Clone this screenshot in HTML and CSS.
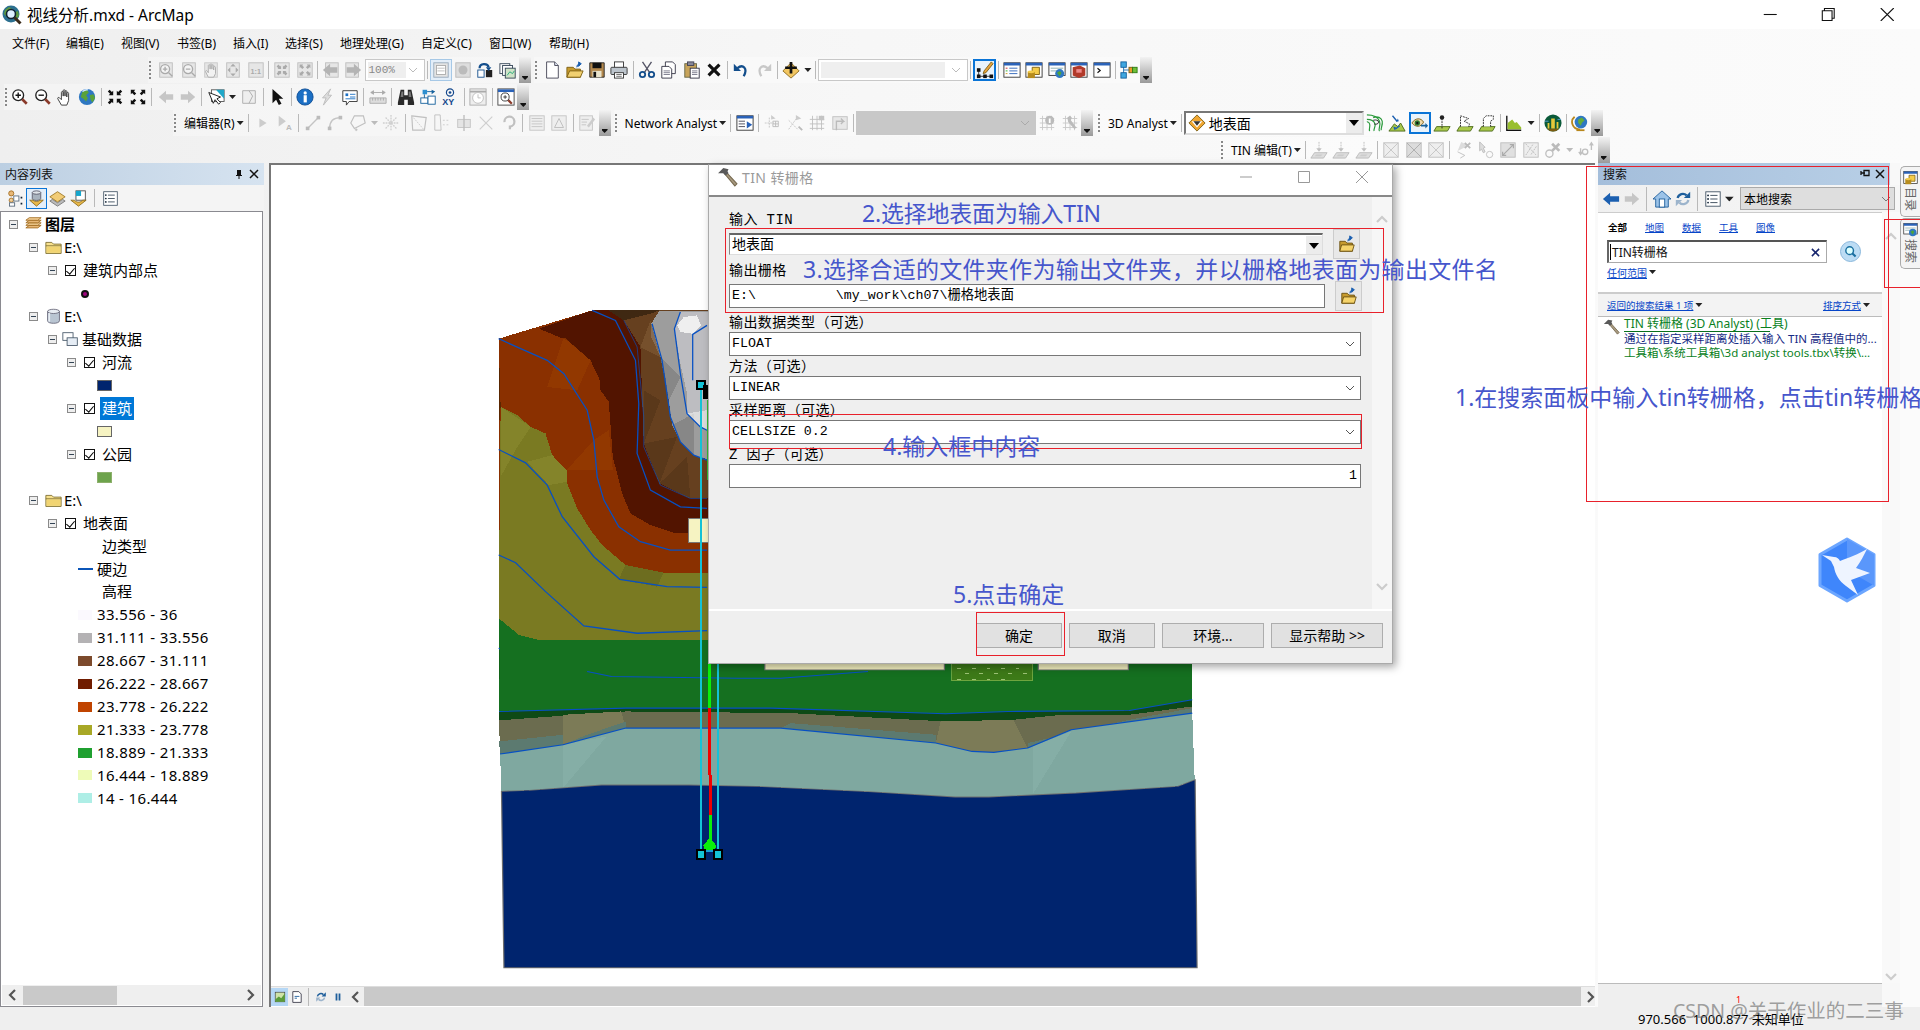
FILE: index.html
```html
<!DOCTYPE html>
<html lang="zh-CN">
<head>
<meta charset="utf-8">
<title>视线分析.mxd - ArcMap</title>
<link rel="stylesheet" href="styles.css">
</head>
<body>
<svg class="defs" aria-hidden="true">
<symbol id="app" viewBox="0 0 20 20"><circle cx="9" cy="9" r="8.500" fill="#2b6f8f"/><path d="M3 5l4-3 3 2-3 3 1 4-3 1-3-3zM11 8l5-2 1 5-4 4z" fill="#5e9a3e"/><circle cx="9" cy="9" r="4.500" fill="#dff0ff" stroke="#123" stroke-width="1.600"/><path d="M12.500 12.500l6 6" stroke="#3a2a1a" stroke-width="3"/></symbol>
<symbol id="zin" viewBox="0 0 20 20"><circle cx="8" cy="8" r="6" fill="#fff" stroke="#222" stroke-width="1.5"/><path d="M5 8h6M8 5v6" stroke="#111" stroke-width="1.5"/><path d="M12.500 12.500l5 5" stroke="#8a3a2a" stroke-width="3"/></symbol>
<symbol id="zout" viewBox="0 0 20 20"><circle cx="8" cy="8" r="6" fill="#fff" stroke="#222" stroke-width="1.500"/><path d="M5 8h6" stroke="#111" stroke-width="1.500"/><path d="M12.500 12.500l5 5" stroke="#8a3a2a" stroke-width="3"/></symbol>
<symbol id="hand" viewBox="0 0 20 20"><path d="M6 19l-4-7c-.6-1.500 1-2 2-1l2 2V5c0-1.500 2-1.500 2 0v4V3c0-1.500 2-1.500 2 0v6V4c0-1.500 2-1.500 2 0v6V6c0-1.500 2-1.500 2 0v8l-2 5z" fill="#fff" stroke="#333"/></symbol>
<symbol id="globe" viewBox="0 0 20 20"><circle cx="10" cy="10" r="9" fill="#2f78c2"/><path d="M5 4l5-2 2 3-3 3 2 3-2 4-3-3-3-2zM13 8l4-1 2 4-3 5-2-3z" fill="#5aa23a"/><path d="M5 4a7 7 0 0 1 6-2" stroke="#cfe6ff" stroke-width="1.500" fill="none"/></symbol>
<symbol id="fin" viewBox="0 0 20 20"><path d="M8 8V3L6.500 4.500 4 2 2 4l2.500 2.500L3 8zM12 8V3l1.500 1.500L16 2l2 2-2.500 2.500L17 8zM8 12v5l-1.500-1.500L4 18l-2-2 2.500-2.500L3 12zM12 12v5l1.500-1.500L16 18l2-2-2.500-2.500L17 12z" fill="#111"/></symbol>
<symbol id="fout" viewBox="0 0 20 20"><path d="M2 2h5L5.500 3.500 8 6 6 8 3.500 5.500 2 7zM18 2h-5l1.500 1.500L12 6l2 2 2.500-2.500L18 7zM2 18h5l-1.500-1.500L8 14l-2-2-2.500 2.500L2 13zM18 18h-5l1.500-1.500L12 14l2-2 2.500 2.500L18 13z" fill="#111"/></symbol>
<symbol id="back" viewBox="0 0 20 20"><path d="M2 10l8-7v4h8v6h-8v4z" fill="#c6c6c6"/></symbol>
<symbol id="fwd" viewBox="0 0 20 20"><path d="M18 10l-8-7v4H2v6h8v4z" fill="#c6c6c6"/></symbol>
<symbol id="sel" viewBox="0 0 20 20"><rect x="5" y="2" width="14" height="13" fill="#fff" stroke="#555"/><path d="M10 2h9v10z" fill="#1fa8c9"/><path d="M2 5l5 12 2-4 4 5 2-2-4-4 4-2z" fill="#fff" stroke="#111"/></symbol>
<symbol id="clr" viewBox="0 0 20 20"><path d="M3 3h14v14H3zM10 3l4 6-4 8" fill="#eee" stroke="#aaa"/></symbol>
<symbol id="arw" viewBox="0 0 20 20"><path d="M5 1v16l4-4 3 6 3-1.500-3-5.500h5z" fill="#111"/></symbol>
<symbol id="info" viewBox="0 0 20 20"><circle cx="10" cy="10" r="9" fill="#1b6fc4" stroke="#0c4c94"/><rect x="8.500" y="8" width="3.500" height="8" fill="#fff"/><circle cx="10.200" cy="5.500" r="1.800" fill="#fff"/></symbol>
<symbol id="bolt" viewBox="0 0 20 20"><path d="M14 1L5 11h4l-3 8 9-11h-4z" fill="#ddd" stroke="#bbb"/></symbol>
<symbol id="pop" viewBox="0 0 20 20"><path d="M2 3h16v12h-9l-3 4v-4H2z" fill="#fff" stroke="#333"/><path d="M5 6h3v3H5z" fill="#1b6fc4"/><path d="M10 7h6M10 10h6M5 12h11" stroke="#1b6fc4"/></symbol>
<symbol id="meas" viewBox="0 0 20 20"><path d="M1 11h18v6H1z" fill="#ddd" stroke="#aaa"/><path d="M4 11v3M7 11v3M10 11v3M13 11v3M16 11v3M2 5h16M2 5l3-2v4zM18 5l-3-2v4z" stroke="#aaa" fill="#aaa"/></symbol>
<symbol id="bino" viewBox="0 0 20 20"><path d="M4 2h4v6h4V2h4l3 14v3h-7v-6H8v6H1v-3z" fill="#2a2a2a"/><path d="M5 4h2v6H4zM13 4h2l1 6h-3z" fill="#777"/></symbol>
<symbol id="rte" viewBox="0 0 20 20"><path d="M9 4h6M6 7v5h3M12 15V9" stroke="#14609c" fill="none"/><rect x="2" y="11" width="8" height="6" fill="#fff" stroke="#14609c"/><rect x="10" y="9" width="8" height="9" fill="#fff" stroke="#14609c"/><rect x="4" y="2" width="5" height="5" fill="#2d8fd0"/><path d="M14 2l4 2-4 3z" fill="#14609c"/></symbol>
<symbol id="time" viewBox="0 0 20 20"><rect x="1" y="1" width="18" height="18" fill="#eee" stroke="#aaa"/><path d="M1 4h18" stroke="#aaa" stroke-width="2"/><circle cx="10" cy="11" r="6" fill="#fff" stroke="#bbb"/><path d="M10 7v4h3" stroke="#bbb" fill="none"/></symbol>
<symbol id="wmag" viewBox="0 0 20 20"><rect x="1" y="1" width="18" height="18" fill="#fff" stroke="#444"/><path d="M1 3h18" stroke="#2a62b8" stroke-width="3"/><circle cx="9" cy="10" r="4.500" fill="#fff" stroke="#333"/><path d="M7 10h4M9 8v4" stroke="#333"/><path d="M12.500 13.500l4 4" stroke="#8a3a2a" stroke-width="2.500"/></symbol>
<symbol id="pgin" viewBox="0 0 20 20"><rect x="3" y="2" width="14" height="16" fill="#e6e6e6" stroke="#bdbdbd"/><circle cx="9" cy="9" r="5" fill="#f4f4f4" stroke="#aaa" stroke-width="1.500"/><path d="M6.500 9h5M9 6.500v5M13 13l4 4" stroke="#aaa" stroke-width="1.500"/></symbol>
<symbol id="pgout" viewBox="0 0 20 20"><rect x="3" y="2" width="14" height="16" fill="#e6e6e6" stroke="#bdbdbd"/><circle cx="9" cy="9" r="5" fill="#f4f4f4" stroke="#aaa" stroke-width="1.500"/><path d="M6.500 9h5M13 13l4 4" stroke="#aaa" stroke-width="1.500"/></symbol>
<symbol id="pgh" viewBox="0 0 20 20"><rect x="3" y="2" width="14" height="16" fill="#e6e6e6" stroke="#c8c8c8"/><path d="M7 18l-3-6c-.5-1 1-2 1.500-1L7 13V5c0-1 2-1 2 0v4V4c0-1 2-1 2 0v5V5c0-1 2-1 2 0v5V7c0-1 2-1 2 0v7l-2 4z" fill="#f2f2f2" stroke="#aaa"/></symbol>
<symbol id="pgfit" viewBox="0 0 20 20"><rect x="3" y="2" width="14" height="16" fill="#e6e6e6" stroke="#bdbdbd"/><path d="M10 3l3 3H7zM10 17l-3-3h6zM4 10l3-3v6zM16 10l-3 3V7z" fill="#aaa"/></symbol>
<symbol id="pgfi" viewBox="0 0 20 20"><rect x="2" y="2" width="16" height="16" fill="#e6e6e6" stroke="#bdbdbd"/><path d="M9 9V5L8 6 6 4 4 6l2 2-1 1zM11 9V5l1 1 2-2 2 2-2 2 1 1zM9 11v4l-1-1-2 2-2-2 2-2-1-1zM11 11v4l1-1 2 2 2-2-2-2 1-1z" fill="#aaa"/></symbol>
<symbol id="pgfo" viewBox="0 0 20 20"><rect x="2" y="2" width="16" height="16" fill="#e6e6e6" stroke="#bdbdbd"/><path d="M4 4h4L7 5l2 2-2 2-2-2-1 1zM16 4h-4l1 1-2 2 2 2 2-2 1 1zM4 16h4l-1-1 2-2-2-2-2 2-1-1zM16 16h-4l1-1-2-2 2-2 2 2 1-1z" fill="#aaa"/></symbol>
<symbol id="pgb" viewBox="0 0 20 20"><rect x="4" y="2" width="14" height="16" fill="#e6e6e6" stroke="#bdbdbd"/><path d="M1 10l8-7v4h8v6H9v4z" fill="#b4b4b4"/></symbol>
<symbol id="pgf" viewBox="0 0 20 20"><rect x="2" y="2" width="14" height="16" fill="#e6e6e6" stroke="#bdbdbd"/><path d="M19 10l-8-7v4H3v6h8v4z" fill="#b4b4b4"/></symbol>
<symbol id="lay1" viewBox="0 0 20 20"><rect x="2" y="2" width="16" height="16" fill="#e4e4e4" stroke="#9ab"/><rect x="5" y="5" width="10" height="10" fill="#fff" stroke="#aaa"/><path d="M6 8h8M6 11h8" stroke="#bbb"/></symbol>
<symbol id="lay2" viewBox="0 0 20 20"><rect x="2" y="2" width="16" height="16" fill="#ddd" stroke="#bbb"/><circle cx="10" cy="10" r="5" fill="#bbb"/></symbol>
<symbol id="flip" viewBox="0 0 20 20"><rect x="2" y="10" width="7" height="8" fill="#fff" stroke="#134e8c"/><rect x="11" y="10" width="7" height="8" fill="#222"/><path d="M4 8c0-6 9-6 10-1" fill="none" stroke="#134e8c" stroke-width="2.500"/><path d="M11 7h6l-3 4z" fill="#134e8c"/></symbol>
<symbol id="stack" viewBox="0 0 20 20"><rect x="1" y="3" width="11" height="11" fill="#fff" stroke="#345"/><rect x="4" y="5" width="11" height="11" fill="#fff" stroke="#345"/><rect x="7" y="8" width="11" height="11" fill="#cfe3c8" stroke="#345"/><path d="M9 16l3-4 3 2 2-3" stroke="#2a7" fill="none"/></symbol>
<symbol id="new" viewBox="0 0 20 20"><path d="M4 1h9l4 4v14H4z" fill="#fff" stroke="#445"/><path d="M13 1v4h4" fill="#dfe6f2" stroke="#445"/></symbol>
<symbol id="open" viewBox="0 0 20 20"><path d="M1 7h7l2 2h6v9H1z" fill="#c79b2e" stroke="#7b5e12"/><path d="M1 18l3-7h15l-3 7z" fill="#f1d070" stroke="#7b5e12"/><path d="M12 7c0-3 2-4 4-4M14 1l3 2-3 3z" fill="#1b5fb0" stroke="#1b5fb0"/></symbol>
<symbol id="save" viewBox="0 0 20 20"><path d="M2 2h16v16H2z" fill="#b3884d" stroke="#222"/><rect x="5" y="2" width="10" height="6" fill="#111"/><rect x="5" y="11" width="10" height="7" fill="#e9e3cc"/><rect x="6" y="12" width="3" height="6" fill="#111"/></symbol>
<symbol id="prnt" viewBox="0 0 20 20"><rect x="5" y="1" width="10" height="7" fill="#fff" stroke="#333"/><rect x="1" y="7" width="18" height="8" rx="1" fill="#bcc4cc" stroke="#333"/><rect x="5" y="13" width="10" height="6" fill="#fff" stroke="#333"/><path d="M7 15h6M7 17h6" stroke="#666"/></symbol>
<symbol id="cut" viewBox="0 0 20 20"><path d="M5 1l8 12M15 1L7 13" stroke="#556" stroke-width="1.500"/><circle cx="5" cy="15" r="3" fill="none" stroke="#134e8c" stroke-width="2"/><circle cx="15" cy="15" r="3" fill="none" stroke="#134e8c" stroke-width="2"/></symbol>
<symbol id="copy" viewBox="0 0 20 20"><path d="M6 1h8l3 3v10H6z" fill="#fff" stroke="#334"/><path d="M2 6h8l3 3v10H2z" fill="#fff" stroke="#334"/><path d="M4 11h7M4 13h7M4 15h7" stroke="#778"/></symbol>
<symbol id="pst" viewBox="0 0 20 20"><rect x="2" y="3" width="13" height="15" fill="#c8a45a" stroke="#664"/><rect x="5" y="1" width="7" height="4" fill="#889" stroke="#445"/><rect x="8" y="8" width="10" height="11" fill="#fff" stroke="#334"/><path d="M10 11h6M10 13h6M10 15h6" stroke="#778"/></symbol>
<symbol id="del" viewBox="0 0 20 20"><path d="M4 4l12 12M16 4L4 16" stroke="#111" stroke-width="3.500"/></symbol>
<symbol id="undo" viewBox="0 0 20 20"><path d="M6 8c6-5 12 0 7 9" fill="none" stroke="#134e8c" stroke-width="2.500"/><path d="M2 3v8h8z" fill="#134e8c"/></symbol>
<symbol id="redo" viewBox="0 0 20 20"><path d="M14 8C8 3 2 8 7 17" fill="none" stroke="#c8c8c8" stroke-width="2.500"/><path d="M18 3v8h-8z" fill="#c8c8c8"/></symbol>
<symbol id="add" viewBox="0 0 20 20"><path d="M10 2l9 9-9 8-9-8z" fill="#f2c661" stroke="#8b6a1c"/><path d="M8.500 1h3v5h5v3h-5v5h-3V9h-5V6h5z" fill="#111"/></symbol>
<symbol id="edt" viewBox="0 0 20 20"><path d="M3 10v7h14" fill="none" stroke="#333"/><rect x="1" y="8" width="4" height="4" fill="#111"/><rect x="1" y="15" width="4" height="4" fill="#111"/><rect x="8" y="15" width="4" height="4" fill="#111"/><rect x="15" y="15" width="4" height="4" fill="#111"/><path d="M9 11L17 1l2 2-8 10-3 1z" fill="#e9a33a" stroke="#7b5e12"/></symbol>
<symbol id="tocw" viewBox="0 0 20 20"><rect x="1" y="2" width="18" height="16" fill="#fff" stroke="#333"/><path d="M1 3.500h18" stroke="#2a62b8" stroke-width="3"/><path d="M7 8h9M7 11h9M7 14h9" stroke="#2a62b8"/><path d="M3 8h2" stroke="#c22"/><path d="M3 11h2" stroke="#2a2"/><path d="M3 14h2" stroke="#c92"/></symbol>
<symbol id="catw" viewBox="0 0 20 20"><rect x="1" y="2" width="18" height="16" fill="#fff" stroke="#333"/><path d="M1 3.500h18" stroke="#2a62b8" stroke-width="3"/><path d="M8 7h8v8H8z" fill="#f4cc4a" stroke="#7b5e12"/><path d="M3 12h8v7H3z" fill="#b78c1e"/><ellipse cx="7" cy="12" rx="4" ry="1.500" fill="#f4cc4a"/></symbol>
<symbol id="srw" viewBox="0 0 20 20"><rect x="1" y="2" width="18" height="14" fill="#fff" stroke="#333"/><path d="M1 3.500h18" stroke="#2a62b8" stroke-width="3"/><path d="M3 8h14M3 11h8" stroke="#8aa"/><circle cx="13" cy="14" r="5" fill="#2f78c2"/><path d="M10 13l3-2 2 2-2 4z" fill="#4da43a"/></symbol>
<symbol id="tlw" viewBox="0 0 20 20"><rect x="1" y="2" width="18" height="16" fill="#fff" stroke="#333"/><path d="M1 3.500h18" stroke="#2a62b8" stroke-width="3"/><path d="M3 7l8-2 6 3v8l-7 3-7-3z" fill="#b23a2a"/><path d="M7 9h6v4H7z" fill="#e88"/></symbol>
<symbol id="pyw" viewBox="0 0 20 20"><rect x="1" y="2" width="18" height="16" fill="#fff" stroke="#333"/><path d="M1 3.500h18" stroke="#2a62b8" stroke-width="3"/><path d="M5 8l3 2.500L5 13" fill="none" stroke="#111" stroke-width="1.300"/></symbol>
<symbol id="mb" viewBox="0 0 20 20"><path d="M4 5v10M4 10h6" stroke="#1a6fb4"/><rect x="1" y="1" width="6" height="6" fill="#3fa7e0" stroke="#14609c"/><rect x="1" y="13" width="6" height="6" fill="#3fa7e0" stroke="#14609c"/><rect x="10" y="7" width="4" height="6" fill="#ea9a2a" stroke="#7b5e12"/><rect x="14" y="7" width="5" height="6" fill="#6fbf3a" stroke="#2c7a12"/></symbol>
<symbol id="tri" viewBox="0 0 20 20"><path d="M6 5l8 5-8 5z" fill="#ccc"/></symbol>
<symbol id="ln" viewBox="0 0 20 20"><path d="M4 16L16 4" stroke="#c4c4c4" stroke-width="1.500"/><rect x="2" y="14" width="4" height="4" fill="#bbb"/><rect x="14" y="2" width="4" height="4" fill="#bbb"/></symbol>
<symbol id="crv" viewBox="0 0 20 20"><path d="M4 16C4 8 8 4 16 4" stroke="#c4c4c4" stroke-width="1.500" fill="none"/><rect x="2" y="14" width="4" height="4" fill="#bbb"/><rect x="14" y="2" width="4" height="4" fill="#bbb"/></symbol>
<symbol id="ply" viewBox="0 0 20 20"><path d="M6 2h10l2 8-12 6-4-6z" fill="none" stroke="#c0c0c0" stroke-width="1.300"/><path d="M8 16v3M6.500 17.500h3" stroke="#bbb"/></symbol>
<symbol id="str" viewBox="0 0 20 20"><path d="M10 1v18M1 10h18M4 4l12 12M16 4L4 16" stroke="#d0d0d0" stroke-width="1.500" stroke-dasharray="2 1"/></symbol>
<symbol id="bxd" viewBox="0 0 20 20"><path d="M2 2l16 2-2 14H3z" fill="none" stroke="#c0c0c0" stroke-width="1.300"/><path d="M2 2l14 16" stroke="#ccc" stroke-dasharray="2 1"/></symbol>
<symbol id="bxr" viewBox="0 0 20 20"><path d="M2 1h6l1 17H2z" fill="none" stroke="#c0c0c0"/><path d="M11 7h7M11 12h7" stroke="#ccc" stroke-dasharray="2 2"/></symbol>
<symbol id="crs" viewBox="0 0 20 20"><rect x="3" y="6" width="14" height="9" fill="#e4e4e4" stroke="#c4c4c4"/><path d="M10 1v18" stroke="#bdbdbd" stroke-width="1.500"/></symbol>
<symbol id="xln" viewBox="0 0 20 20"><path d="M3 3l14 14M17 3L3 17" stroke="#cfcfcf" stroke-width="1.300"/></symbol>
<symbol id="lop" viewBox="0 0 20 20"><path d="M5 9a5.500 5.500 0 1 1 6 5v3" fill="none" stroke="#c0c0c0" stroke-width="2.500"/></symbol>
<symbol id="tbl" viewBox="0 0 20 20"><rect x="2" y="2" width="16" height="16" fill="#eee" stroke="#c4c4c4"/><path d="M4 5h12M4 8h12M4 11h12M4 14h12" stroke="#c4c4c4"/></symbol>
<symbol id="tbv" viewBox="0 0 20 20"><rect x="2" y="2" width="16" height="16" fill="#eee" stroke="#c4c4c4"/><path d="M5 15l5-10 5 10z" fill="none" stroke="#bbb"/></symbol>
<symbol id="tbe" viewBox="0 0 20 20"><rect x="2" y="2" width="14" height="16" fill="#eee" stroke="#c4c4c4"/><path d="M4 6h8M4 9h6M4 12h5" stroke="#c4c4c4"/><path d="M10 13l7-9 2 2-7 9z" fill="#ccc"/></symbol>
<symbol id="nw" viewBox="0 0 20 20"><rect x="1" y="2" width="18" height="16" fill="#fff" stroke="#333"/><path d="M1 3.500h18" stroke="#2a62b8" stroke-width="3"/><path d="M3 8h7M3 11h7M3 14h7" stroke="#445"/><path d="M12 8l6 4-6 4z" fill="#2a62b8"/></symbol>
<symbol id="ngr" viewBox="0 0 20 20"><path d="M2 10h10M7 4v12" stroke="#c4c4c4" stroke-dasharray="2 1"/><path d="M11 8h6v6h-6zM14 8v6M11 11h6" fill="none" stroke="#bbb"/><path d="M9 1l5 4-5 1z" fill="#ccc"/></symbol>
<symbol id="ndg" viewBox="0 0 20 20"><path d="M3 7l10 10M3 17L13 3" stroke="#c4c4c4" stroke-dasharray="2 1"/><path d="M11 1l6 4-6 2z" fill="#ccc"/><path d="M14 14l4 4" stroke="#bbb" stroke-width="2"/></symbol>
<symbol id="grd" viewBox="0 0 20 20"><path d="M2 6h16M2 11h16M2 16h16M5 2v16M10 2v16M15 2v16" stroke="#c0c0c0"/><rect x="12" y="2" width="6" height="5" fill="#c4c4c4"/></symbol>
<symbol id="grp" viewBox="0 0 20 20"><rect x="2" y="3" width="16" height="14" fill="#e8e8e8" stroke="#c0c0c0"/><path d="M6 18V8h8l-3-3M14 8l-3 3" fill="none" stroke="#bbb" stroke-width="1.500"/></symbol>
<symbol id="gri" viewBox="0 0 20 20"><path d="M2 5h16M2 10h16M2 15h16M5 2v16M10 2v16M15 2v16" stroke="#c8c8c8"/><circle cx="13" cy="7" r="5" fill="#bbb"/><rect x="12" y="5" width="2" height="5" fill="#fff"/></symbol>
<symbol id="grw" viewBox="0 0 20 20"><path d="M2 5h16M2 10h16M2 15h16M5 2v16M10 2v16M15 2v16" stroke="#c8c8c8"/><path d="M7 4l3-2 2 2-1 3 6 8-2 2-7-8z" fill="#bbb"/></symbol>
<symbol id="dia" viewBox="0 0 20 20"><path d="M10 1l9 9-9 9-9-9z" fill="#f0a630" stroke="#7b5e12"/><path d="M4 8h12l-6 7z" fill="#fff"/><path d="M6 8h8l-4 5z" fill="#333"/></symbol>
<symbol id="cnt" viewBox="0 0 20 20"><path d="M1 1c6 0 12 2 14 7s-2 9 0 11M1 6c5 0 8 2 9 5s-2 6-1 8M4 19c-1-3 1-5 0-8S1 9 1 9M8 4c5-2 9 0 10 4s-2 8-1 10" fill="none" stroke="#2b9a3c" stroke-width="1.300"/><path d="M8 7c3-1 6 0 6 2s-3 3-5 2" fill="none" stroke="#222"/></symbol>
<symbol id="stp" viewBox="0 0 20 20"><path d="M1 19l6-8 4 3 3-4 5 9z" fill="#a9c84a" stroke="#4c6a1a"/><path d="M5 2l5 6M13 13l-5 4" stroke="#1b5fb0" stroke-width="1.500"/><path d="M9 9l3-1-1-3zM7 18l2-3-3-1z" fill="#1b5fb0"/></symbol>
<symbol id="eye" viewBox="0 0 20 20"><path d="M1 10c4-6 10-6 13-1-3 6-9 6-13 1z" fill="#f1d9a8" stroke="#7b5e12"/><circle cx="7" cy="10" r="3" fill="#2f7a33"/><circle cx="7" cy="10" r="1.300" fill="#111"/><path d="M11 12h5v-2l3 3-3 3v-2h-5z" fill="#14609c"/></symbol>
<symbol id="pln" viewBox="0 0 20 20"><path d="M4 14h15l-3 5H1z" fill="#a9c84a" stroke="#4c6a1a"/><path d="M10 5v11" stroke="#222" stroke-dasharray="2 1"/><circle cx="10" cy="4" r="2.500" fill="#222"/></symbol>
<symbol id="plp" viewBox="0 0 20 20"><path d="M4 14h15l-3 5H1z" fill="#a9c84a" stroke="#4c6a1a"/><path d="M5 14V2l9 3-5 3 6 3-1 3" fill="#fff" stroke="#222" stroke-dasharray="2 1"/></symbol>
<symbol id="plb" viewBox="0 0 20 20"><path d="M4 14h15l-3 5H1z" fill="#a9c84a" stroke="#4c6a1a"/><path d="M6 14V5l3-3h8v4l-3 2v6" fill="#fff" stroke="#222" stroke-dasharray="2 1"/></symbol>
<symbol id="prf" viewBox="0 0 20 20"><path d="M2 2v16h16" fill="none" stroke="#111" stroke-width="1.500"/><path d="M3 17V10l5-4 3 4 2-1 5 6v2z" fill="#99bf2f"/></symbol>
<symbol id="wrld" viewBox="0 0 20 20"><circle cx="10" cy="10" r="9.500" fill="#0b5a3a"/><path d="M3 16h14a9 9 0 0 1-14 0z" fill="#7a5c10"/><path d="M8 5h4v11H8zM4 10h2v6H4zM14 9h2v7h-2z" fill="#e5c83a"/><path d="M1 8h4M15 6h4" stroke="#5aa3d8"/></symbol>
<symbol id="arc" viewBox="0 0 20 20"><path d="M4 3a8 8 0 0 0 6 14" fill="none" stroke="#b8871c" stroke-width="2"/><path d="M6 18h9" stroke="#b8871c" stroke-width="2"/><circle cx="11" cy="9" r="7" fill="#2f78c2"/><path d="M8 6l4-2 3 3-3 3-1 3-3-3z" fill="#63ad3a"/></symbol>
<symbol id="tnu" viewBox="0 0 20 20"><path d="M5 13h14l-4 6H1z" fill="#ddd" stroke="#bbb"/><path d="M7 15h7l-2 2H5z" fill="#ccc"/><path d="M10 1v9" stroke="#bbb" stroke-dasharray="2 1"/><path d="M7 8h6l-3 4z" fill="#c0c0c0"/></symbol>
<symbol id="bxx" viewBox="0 0 20 20"><rect x="2" y="2" width="16" height="16" fill="#eee" stroke="#bdbdbd"/><path d="M2 2l16 16M18 2L2 18" stroke="#c4c4c4"/></symbol>
<symbol id="bxf" viewBox="0 0 20 20"><rect x="2" y="2" width="16" height="16" fill="#dcdcdc" stroke="#bdbdbd"/><path d="M2 2l16 16M18 2L2 18" stroke="#aaa"/></symbol>
<symbol id="trx" viewBox="0 0 20 20"><path d="M4 12l8 4-5 3" fill="none" stroke="#c0c0c0"/><path d="M8 1l8 4-12 6z" fill="#ddd"/><path d="M12 2l6 6M18 2l-6 6" stroke="#bbb" stroke-width="2"/></symbol>
<symbol id="trc" viewBox="0 0 20 20"><path d="M3 1l6 6-2 1 2 4-2 1-2-4-2 2z" fill="#ddd" stroke="#bbb"/><circle cx="14" cy="15" r="3.500" fill="none" stroke="#c0c0c0"/></symbol>
<symbol id="trb" viewBox="0 0 20 20"><rect x="2" y="2" width="16" height="16" fill="#e0e0e0" stroke="#bdbdbd"/><path d="M4 16L16 4M12 4h4v4M4 12v4h4" fill="none" stroke="#aaa" stroke-width="1.300"/></symbol>
<symbol id="trd" viewBox="0 0 20 20"><rect x="2" y="2" width="16" height="16" fill="#eee" stroke="#bdbdbd"/><path d="M4 3l12 13M12 4l-8 12M16 6l-6 9" stroke="#bbb" stroke-dasharray="2 1"/></symbol>
<symbol id="trm" viewBox="0 0 20 20"><circle cx="6" cy="14" r="4" fill="none" stroke="#c0c0c0" stroke-width="1.500"/><path d="M9 3l8 8M17 3l-8 8" stroke="#bbb" stroke-width="3"/></symbol>
<symbol id="trz" viewBox="0 0 20 20"><path d="M4 8v6M2 12l2 3 2-3M16 2v8M14 5l2-3 2 3" stroke="#c0c0c0" fill="none" stroke-width="1.500"/><circle cx="9" cy="12" r="3" fill="none" stroke="#c0c0c0" stroke-width="1.500"/></symbol>
<symbol id="lyr" viewBox="0 0 20 20"><path d="M1 14l4-3h14l-4 3z" fill="#e8b877" stroke="#a06a1e"/><path d="M1 11l4-3h14l-4 3z" fill="#f3cf96" stroke="#a06a1e"/><path d="M1 8l4-3h14l-4 3z" fill="#e8b877" stroke="#a06a1e"/><path d="M1 5l4-3h14l-4 3z" fill="#f3cf96" stroke="#a06a1e"/></symbol>
<symbol id="fld" viewBox="0 0 20 20"><path d="M1 4h7l2 2h9v11H1z" fill="#f7e08d" stroke="#7a6a2c"/><path d="M1 8h18" stroke="#7a6a2c"/><path d="M2 9h16v7H2z" fill="#f1d472"/></symbol>
<symbol id="db" viewBox="0 0 20 20"><path d="M3 4v11c0 4 14 4 14 0V4z" fill="#b9c5d2" stroke="#667"/><ellipse cx="10" cy="4" rx="7" ry="2.500" fill="#e8edf3" stroke="#667"/><path d="M5 6v10" stroke="#e8edf3" stroke-width="2"/></symbol>
<symbol id="grpl" viewBox="0 0 20 20"><rect x="1" y="2" width="12" height="9" fill="#fff" stroke="#456"/><rect x="6" y="8" width="12" height="9" fill="#e6edf5" stroke="#456"/></symbol>
<symbol id="t1" viewBox="0 0 20 20"><circle cx="5" cy="4" r="3" fill="#e8b877" stroke="#a06a1e"/><circle cx="5" cy="12" r="2.500" fill="#f3cf96" stroke="#a06a1e"/><rect x="8" y="7" width="6" height="6" fill="#fff" stroke="#567"/><rect x="3" y="15" width="6" height="4" fill="#fff" stroke="#567"/><path d="M16 9h2M16 16h2" stroke="#123" stroke-width="2"/></symbol>
<symbol id="t2" viewBox="0 0 20 20"><path d="M5 3v7c0 3 10 3 10 0V3z" fill="#a8b3be" stroke="#556"/><ellipse cx="10" cy="3" rx="5" ry="2" fill="#dfe5ea" stroke="#556"/><path d="M2 12l8 7 8-7h-4c-2 2-6 2-8 0z" fill="#e8b84a" stroke="#8a6a1c"/></symbol>
<symbol id="t3" viewBox="0 0 20 20"><path d="M1 13l9 6 9-6-3-2-6 4-6-4z" fill="#bbb" stroke="#777"/><path d="M1 8l9-6 9 6-9 6z" fill="#f2cc76" stroke="#9a7420"/></symbol>
<symbol id="t4" viewBox="0 0 20 20"><rect x="7" y="1" width="11" height="11" fill="#fff" stroke="#444"/><path d="M7 1h6v6H7z" fill="#17a6cc"/><path d="M1 12l9 7 9-7h-4c-3 3-7 3-10 0z" fill="#e8b84a" stroke="#8a6a1c"/></symbol>
<symbol id="t5" viewBox="0 0 20 20"><rect x="2" y="2" width="16" height="16" fill="#fff" stroke="#456"/><path d="M7 6h8M7 10h8M7 14h8" stroke="#345"/><circle cx="4.500" cy="6" r="1" fill="#123"/><circle cx="4.500" cy="10" r="1" fill="#123"/><circle cx="4.500" cy="14" r="1" fill="#123"/></symbol>
<symbol id="ham" viewBox="0 0 20 20"><path d="M7 7l10 12 2-2L9 6z" fill="#a89a80" stroke="#776a50"/><path d="M1 7l5-5 5 1-1 2 1 2-3 2-2-2z" fill="#5a5a5a"/></symbol>
<symbol id="ofld" viewBox="0 0 20 20"><path d="M2 7h6l2 2h6v9H2z" fill="#c79b2e" stroke="#6a5012"/><path d="M2 18l2-7h14l-2 7z" fill="#f5d36a" stroke="#6a5012"/><path d="M11 7c0-3 2-4 4-4M13 1l3 2-3 3z" fill="#1b5fb0" stroke="#1b5fb0"/></symbol>
<symbol id="home" viewBox="0 0 20 20"><path d="M10 1L0 10h3v9h14v-9h3z" fill="#9cc3e8" stroke="#1f5f9c"/><rect x="7" y="10" width="6" height="9" fill="#fff" stroke="#1f5f9c"/></symbol>
<symbol id="rfsh" viewBox="0 0 20 20"><path d="M4 9a6 6 0 0 1 10-3" fill="none" stroke="#1f5f9c" stroke-width="2.500"/><path d="M16 11a6 6 0 0 1-10 3" fill="none" stroke="#9cb4cc" stroke-width="2.500"/><path d="M18 2v7h-7z" fill="#1f5f9c"/><path d="M2 18v-7h7z" fill="#9cb4cc"/></symbol>
<symbol id="bk" viewBox="0 0 20 20"><path d="M1 10l8-7v4h10v6H9v4z" fill="#1b5fb0"/></symbol>
<symbol id="mp" viewBox="0 0 20 20"><rect x="2" y="2" width="16" height="16" fill="#cfe3a8" stroke="#333"/><path d="M2 14l6-5 4 3 6-8v14H2z" fill="#5a9c3a"/></symbol>
<symbol id="dc" viewBox="0 0 20 20"><path d="M3 1h10l4 4v14H3z" fill="#fff" stroke="#223" stroke-width="1.300"/><path d="M6 9h8M6 12h4" stroke="#1f5f9c" stroke-width="1.500"/></symbol>
<symbol id="bird" viewBox="0 0 62 68"><path d="M31 3L58 18.500V49.500L31 65 4 49.500V18.500Z" fill="#3f86fb" stroke="#6ca6ff" stroke-width="3" stroke-linejoin="round"/><path d="M31 3L58 18.500V49.500L31 34Z" fill="#5a97fb"/><path d="M6 19l12 2c3 0 5 2 6 4 8-3 19-7 27-12-3 6-6 12-11 19l14 5-19 7 7 15-12-9c-7-5-11-12-12-19l-3-6z" fill="#eef4ff"/></symbol>
</svg>

<div class="app">
  <header class="titlebar">
    <svg class="appicon"><use href="#app"/></svg>
    <span class="apptitle">视线分析.mxd - ArcMap</span>
    <div class="winbtns">
      <svg class="wb" viewBox="0 0 12 12"><path d="M0 6h12" stroke="#111"/></svg>
      <svg class="wb" viewBox="0 0 12 12"><path d="M.5 2.500h9v9h-9zM2.500 2.500v-2h9v9h-2" fill="none" stroke="#111"/></svg>
      <svg class="wb" viewBox="0 0 12 12"><path d="M0 0l12 12M12 0L0 12" stroke="#111"/></svg>
    </div>
  </header>
  <nav class="menubar">
    <span class="m1">文件(F)</span><span class="m2">编辑(E)</span><span class="m3">视图(V)</span><span class="m4">书签(B)</span><span class="m5">插入(I)</span><span class="m6">选择(S)</span><span class="m7">地理处理(G)</span><span class="m8">自定义(C)</span><span class="m9">窗口(W)</span><span class="m10">帮助(H)</span>
  </nav>

  <div class="tbrow r1">
    <div class="tb tb1a">
      <i class="g"></i>
      <i class="b"><svg><use href="#pgin"/></svg></i><i class="b"><svg><use href="#pgout"/></svg></i><i class="b"><svg><use href="#pgh"/></svg></i><i class="b"><svg><use href="#pgfit"/></svg></i><i class="b"><svg viewBox="0 0 20 20"><rect x="2" y="2" width="16" height="16" fill="#e6e6e6" stroke="#bdbdbd"/><text x="4" y="14" font-size="8" font-weight="700" font-family="Liberation Sans" fill="#aaa">1:1</text></svg></i><i class="s sn"></i>
      <i class="b"><svg><use href="#pgfi"/></svg></i><i class="b"><svg><use href="#pgfo"/></svg></i><i class="s sn"></i>
      <i class="b"><svg><use href="#pgb"/></svg></i><i class="b"><svg><use href="#pgf"/></svg></i>
      <div class="pct"><span class="pctv">100%</span><svg class="chev" viewBox="0 0 10 6"><path d="M1 1l4 4 4-4" fill="none" stroke="#bbb"/></svg></div><i class="s"></i>
      <i class="b act"><svg><use href="#lay1"/></svg></i><i class="b"><svg><use href="#lay2"/></svg></i><i class="b"><svg><use href="#flip"/></svg></i><i class="b"><svg><use href="#stack"/></svg></i>
      <i class="o"></i>
    </div>
    <div class="tb tb1b">
      <i class="g"></i>
      <i class="b"><svg><use href="#new"/></svg></i><i class="b"><svg><use href="#open"/></svg></i><i class="b"><svg><use href="#save"/></svg></i><i class="b"><svg><use href="#prnt"/></svg></i><i class="s"></i>
      <i class="b"><svg><use href="#cut"/></svg></i><i class="b"><svg><use href="#copy"/></svg></i><i class="b"><svg><use href="#pst"/></svg></i><i class="b"><svg><use href="#del"/></svg></i><i class="s"></i>
      <i class="b"><svg><use href="#undo"/></svg></i><i class="b"><svg><use href="#redo"/></svg></i><i class="s"></i>
      <i class="b"><svg><use href="#add"/></svg></i><i class="dd"></i><i class="s"></i>
      <div class="scale"><span class="scalev"></span><svg class="chev" viewBox="0 0 10 6"><path d="M1 1l4 4 4-4" fill="none" stroke="#bbb"/></svg></div><i class="s"></i>
      <i class="b act2"><svg><use href="#edt"/></svg></i><i class="s"></i>
      <i class="b"><svg><use href="#tocw"/></svg></i><i class="b"><svg><use href="#catw"/></svg></i><i class="b"><svg><use href="#srw"/></svg></i><i class="b"><svg><use href="#tlw"/></svg></i><i class="b"><svg><use href="#pyw"/></svg></i><i class="s"></i>
      <i class="b"><svg><use href="#mb"/></svg></i>
      <i class="o"></i>
    </div>
  </div>

  <div class="tbrow r2">
    <div class="tb tb2">
      <i class="g"></i>
      <i class="b"><svg><use href="#zin"/></svg></i><i class="b"><svg><use href="#zout"/></svg></i><i class="b"><svg><use href="#hand"/></svg></i><i class="b"><svg><use href="#globe"/></svg></i><i class="s"></i>
      <i class="b"><svg><use href="#fin"/></svg></i><i class="b"><svg><use href="#fout"/></svg></i><i class="s"></i>
      <i class="b"><svg><use href="#back"/></svg></i><i class="b"><svg><use href="#fwd"/></svg></i><i class="s"></i>
      <i class="b"><svg><use href="#sel"/></svg></i><i class="dd"></i><i class="b"><svg><use href="#clr"/></svg></i><i class="s"></i>
      <i class="b"><svg><use href="#arw"/></svg></i><i class="s"></i>
      <i class="b"><svg><use href="#info"/></svg></i><i class="b"><svg><use href="#bolt"/></svg></i><i class="b"><svg><use href="#pop"/></svg></i><i class="s"></i>
      <i class="b"><svg><use href="#meas"/></svg></i><i class="s"></i>
      <i class="b"><svg><use href="#bino"/></svg></i><i class="b"><svg><use href="#rte"/></svg></i><i class="b"><svg viewBox="0 0 20 20"><circle cx="10" cy="5" r="4" fill="none" stroke="#14488c" stroke-width="1.300"/><circle cx="10" cy="5" r="1.500" fill="#14488c"/><text x="1.500" y="18.500" font-size="10" font-weight="700" font-family="Liberation Sans" fill="#14488c">XY</text></svg></i><i class="s"></i>
      <i class="b"><svg><use href="#time"/></svg></i><i class="s"></i>
      <i class="b"><svg><use href="#wmag"/></svg></i>
      <i class="o"></i>
    </div>
  </div>

  <div class="tbrow r3">
    <div class="tb tb3a">
      <i class="g"></i><span class="tl">编辑器(R)</span><i class="dd"></i><i class="s"></i>
      <i class="b"><svg><use href="#tri"/></svg></i><i class="b"><svg viewBox="0 0 20 20"><path d="M3 2l8 6-8 6z" fill="#ccc"/><text x="11" y="18" font-size="9" font-weight="700" font-family="Liberation Sans" fill="#bbb">A</text></svg></i><i class="s"></i>
      <i class="b"><svg><use href="#ln"/></svg></i><i class="b"><svg><use href="#crv"/></svg></i><i class="b"><svg><use href="#ply"/></svg></i><i class="dd dis"></i><i class="b"><svg><use href="#str"/></svg></i><i class="s"></i>
      <i class="b"><svg><use href="#bxd"/></svg></i><i class="b"><svg><use href="#bxr"/></svg></i><i class="b"><svg><use href="#crs"/></svg></i><i class="b"><svg><use href="#xln"/></svg></i><i class="b"><svg><use href="#lop"/></svg></i><i class="s"></i>
      <i class="b"><svg><use href="#tbl"/></svg></i><i class="b"><svg><use href="#tbv"/></svg></i><i class="s"></i>
      <i class="b"><svg><use href="#tbe"/></svg></i>
      <i class="o"></i>
    </div>
    <div class="tb tb3b">
      <i class="g"></i><span class="tl">Network Analyst</span><i class="dd"></i><i class="s"></i>
      <i class="b"><svg><use href="#nw"/></svg></i><i class="s"></i>
      <i class="b"><svg><use href="#ngr"/></svg></i><i class="b"><svg><use href="#ndg"/></svg></i><i class="b"><svg><use href="#grd"/></svg></i><i class="b"><svg><use href="#grp"/></svg></i><i class="s"></i>
      <div class="nacombo"><svg class="chev" viewBox="0 0 10 6"><path d="M1 1l4 4 4-4" fill="none" stroke="#aaa"/></svg></div>
      <i class="b"><svg><use href="#gri"/></svg></i><i class="b"><svg><use href="#grw"/></svg></i>
      <i class="o"></i>
    </div>
    <div class="tb tb3c">
      <i class="g"></i><span class="tl">3D Analyst</span><i class="dd"></i><i class="s"></i>
      <div class="tincombo"><svg class="tinic"><use href="#dia"/></svg><span class="tinv">地表面</span><i class="tindd"></i></div>
      <i class="b"><svg><use href="#cnt"/></svg></i><i class="b"><svg><use href="#stp"/></svg></i><i class="b act2"><svg><use href="#eye"/></svg></i><i class="b"><svg><use href="#pln"/></svg></i><i class="b"><svg><use href="#plp"/></svg></i><i class="b"><svg><use href="#plb"/></svg></i><i class="s"></i>
      <i class="b"><svg><use href="#prf"/></svg></i><i class="dd"></i><i class="s"></i>
      <i class="b"><svg><use href="#wrld"/></svg></i><i class="s"></i>
      <i class="b"><svg><use href="#arc"/></svg></i>
      <i class="o"></i>
    </div>
  </div>

  <div class="tbrow r4">
    <div class="tb tb4">
      <i class="g"></i><span class="tl">TIN 编辑(T)</span><i class="dd"></i><i class="s"></i>
      <i class="b"><svg><use href="#tnu"/></svg></i><i class="b"><svg><use href="#tnu"/></svg></i><i class="b"><svg><use href="#tnu"/></svg></i><i class="s"></i>
      <i class="b"><svg><use href="#bxx"/></svg></i><i class="b"><svg><use href="#bxf"/></svg></i><i class="b"><svg><use href="#bxx"/></svg></i><i class="s"></i>
      <i class="b"><svg><use href="#trx"/></svg></i><i class="b"><svg><use href="#trc"/></svg></i><i class="b"><svg><use href="#trb"/></svg></i><i class="b"><svg><use href="#trd"/></svg></i><i class="b"><svg><use href="#trm"/></svg></i><i class="dd dis"></i><i class="b"><svg><use href="#trz"/></svg></i>
      <i class="o"></i>
    </div>
  </div>

  <main class="main">
    <aside class="toc">
      <div class="phead toch"><span>内容列表</span><span class="pclose"><svg class="pin" viewBox="0 0 10 10"><path d="M3 1h4v5h1v1H5.500v3h-1V7H2V6h1z" fill="#111"/></svg><svg class="pin" viewBox="0 0 10 10"><path d="M1 1l8 8M9 1L1 9" stroke="#111" stroke-width="1.500"/></svg></span></div>
      <div class="toct">
        <i class="tc"><svg><use href="#t1"/></svg></i><i class="tc tcact"><svg><use href="#t2"/></svg></i><i class="tc"><svg><use href="#t3"/></svg></i><i class="tc"><svg><use href="#t4"/></svg></i><i class="s tcs"></i><i class="tc"><svg><use href="#t5"/></svg></i>
      </div>
      <div class="treebox">
        <div class="tree">
          <div class="r l0"><i class="x"></i><svg class="ti tiroot"><use href="#lyr"/></svg><b class="rootname">图层</b></div>
          <div class="r l1"><i class="x"></i><svg class="ti"><use href="#fld"/></svg><span class="t1">E:\</span></div>
          <div class="r l2"><i class="x"></i><i class="ck"></i><span class="t2">建筑内部点</span></div>
          <div class="r sdot"><i class="dot"></i></div>
          <div class="r l1"><i class="x"></i><svg class="ti"><use href="#db"/></svg><span class="t1">E:\</span></div>
          <div class="r l2"><i class="x"></i><svg class="ti tig"><use href="#grpl"/></svg><span class="t2g">基础数据</span></div>
          <div class="r l3"><i class="x"></i><i class="ck"></i><span class="t3">河流</span></div>
          <div class="r sw"><i class="swt river"></i></div>
          <div class="r l3"><i class="x"></i><i class="ck"></i><span class="t3 selected">建筑</span></div>
          <div class="r sw"><i class="swt bld"></i></div>
          <div class="r l3"><i class="x"></i><i class="ck"></i><span class="t3">公园</span></div>
          <div class="r sw"><i class="swt park"></i></div>
          <div class="r l1"><i class="x"></i><svg class="ti"><use href="#fld"/></svg><span class="t1">E:\</span></div>
          <div class="r l2"><i class="x"></i><i class="ck"></i><span class="t2">地表面</span></div>
          <div class="r lh">边类型</div>
          <div class="r lg"><i class="ln"></i><span>硬边</span></div>
          <div class="r lh">高程</div>
          <div class="r lg"><i class="lc c1"></i><span>33.556 - 36</span></div>
          <div class="r lg"><i class="lc c2"></i><span>31.111 - 33.556</span></div>
          <div class="r lg"><i class="lc c3"></i><span>28.667 - 31.111</span></div>
          <div class="r lg"><i class="lc c4"></i><span>26.222 - 28.667</span></div>
          <div class="r lg"><i class="lc c5"></i><span>23.778 - 26.222</span></div>
          <div class="r lg"><i class="lc c6"></i><span>21.333 - 23.778</span></div>
          <div class="r lg"><i class="lc c7"></i><span>18.889 - 21.333</span></div>
          <div class="r lg"><i class="lc c8"></i><span>16.444 - 18.889</span></div>
          <div class="r lg"><i class="lc c9"></i><span>14 - 16.444</span></div>
        </div>
        <div class="tocscroll"><svg class="sa" viewBox="0 0 10 12"><path d="M7 1L2 6l5 5" fill="none" stroke="#555" stroke-width="2.200"/></svg><i class="tocthumb"></i><svg class="sa sar" viewBox="0 0 10 12"><path d="M3 1l5 5-5 5" fill="none" stroke="#555" stroke-width="2.200"/></svg></div>
      </div>
    </aside>

    <section class="mapcol">
      <svg class="map" viewBox="270 165 1326 821" shape-rendering="crispEdges">
        <g transform="translate(480,290) scale(.33333)">
          <path d="M54 145L335 60H700V1200H54Z" fill="#7a7a22"/>
          <path d="M60 350L54 1000V145L335 60H700V848H550L435 825 365 765 330 720 290 655 258 575V540L215 495 195 430 150 410 110 375Z" fill="#8a3000"/>
          <path d="M54 145L60 350 54 420Z" fill="#5a2600"/>
          <path d="M175 115L335 60H700V730H585L510 705 450 670 425 610 397 500 385 335 360 300 358 270 330 210 260 150Z" fill="#521400"/>
          <path d="M385 60H700V625H630L537 580 490 460 480 170 430 90Z" fill="#66401f"/>
          <path d="M385 60H537L510 70 430 90Z" fill="#3f2812"/>
          <path d="M537 62H700V512L640 495 600 455 575 405 565 330 555 260 540 200 512 140V100Z" fill="#9d9d9d"/>
          <path d="M600 65H700V420L660 410 620 370 620 310 600 220 582 115Z" fill="#bdbdc1"/>
          <path d="M590 105L610 80 650 75 662 105 637 130 600 125Z" fill="#efefef"/>
          <path d="M540 200L600 260 565 330Z M575 405L640 370 640 495 600 455Z" fill="#7e7e7e" opacity=".7"/>
          <path d="M620 370L680 360V420L660 410Z" fill="#e4e4e4" opacity=".8"/>
          <path d="M490 300L540 330 490 460Z M537 580L620 500 630 625Z M490 460L590 440 537 580Z" fill="#4d3016" opacity=".5"/>
          <path d="M510 90L480 170 540 200Z" fill="#7d5732" opacity=".7"/>
          <path d="M250 140L330 210 290 300 200 290Z M340 450L385 420 397 540 258 540Z" fill="#963c00" opacity=".7"/>
          <path d="M60 350L150 410 110 470 60 560Z M215 495L258 540 258 575 205 585 140 515Z" fill="#84842a"/>
          <path d="M435 825L550 848 530 890 415 868Z" fill="#6d6d1f"/>
          <path d="M54 985L115 1035 250 1070 260 1060H680V1200H54Z" fill="#157020"/>
          <path d="M130 1110L100 1200H54V1080Z" fill="#116417"/>
          <g fill="none" stroke="#0650c4" stroke-width="3.800" shape-rendering="auto">
            <path d="M54 145L120 175 200 210 250 250 320 360 340 450 350 560 370 630 415 710 480 755 570 780 680 780"/>
            <path d="M54 478L135 518 200 585 245 680 340 800 418 868 560 890 680 892"/>
            <path d="M54 795L105 818 195 905 310 1008 470 1030 680 1022"/>
            <path d="M54 1075L130 1108 250 1130 390 1160 680 1162"/>
            <path d="M335 60L405 90 465 210 475 340 470 490 510 600 600 650 680 655"/>
            <path d="M515 100L545 210 570 380 600 455 640 495 680 510"/>
            <path d="M600 65L582 115 600 250 620 370 660 410 680 420"/>
            <path d="M680 105L637 132V270"/>
            <path d="M430 90L470 170 490 380 490 470 540 585 630 625 680 625" stroke-width="2.500" opacity=".75"/>
          </g>
          <rect x="253" y="1060" width="403" height="80" fill="#f6f3c2" stroke="#777" stroke-width="3"/>
          <rect x="625" y="685" width="100" height="72" fill="#f6f3c2" stroke="#777" stroke-width="3"/>
          <path d="M448 1087h10l5 6v15l-5 6h-10l-5-6v-15z" fill="#111"/><rect x="447" y="1094" width="12" height="12" fill="#a0057e"/>
        </g>
        <g transform="translate(480,640) scale(.4848,.33333)">
          <path d="M40 0H1470V180L1340 212 1090 215 960 222 600 205 300 205 38 215Z" fill="#157020"/>
          <path d="M38 215L300 205 600 205 960 222 1090 215 1340 212 1470 180V200L1340 225 1200 225 1100 240 960 245 640 220 300 215 100 235 38 242Z" fill="#0e4a16"/>
          <path d="M38 242L100 235 300 215 640 220 960 245 1100 240 1200 225 1340 225 1470 200V220L1220 270 1130 325 1060 338 1015 335 940 310 620 265 300 265 170 315 40 343Z" fill="#6b6c4f"/>
          <path d="M170 225L290 215 300 265 170 315Z M950 245L1100 240 1130 325 1060 338 1015 335 940 310Z" fill="#7c7b57"/>
          <path d="M38 305L170 285V315L40 343Z M220 285L300 245V265L170 315Z M640 250L940 285V310L620 265Z M1130 310L1340 240 1470 205V220L1220 270 1130 325Z" fill="#5c7a70"/>
          <path d="M40 343L170 315 300 265 620 265 940 310 1015 335 1060 338 1130 325 1220 270 1470 220 1475 420 1440 440 1230 460 1050 472 980 472 800 456 570 440 430 436 250 436 100 452 43 455Z" fill="#7fa8a0"/>
          <path d="M170 315L260 290 170 445Z M1140 320L1220 275 1140 465Z" fill="#87b0a8" opacity=".7"/>
          <path d="M43 455L100 452 250 436 430 436 570 440 800 456 980 472 1050 472 1230 460 1440 440 1476 420 1480 985H48Z" fill="#00246e" stroke="#6e6e6e" stroke-width="2.500"/>
          <g fill="none" stroke="#0650c4" stroke-width="3.200" shape-rendering="auto">
            <path d="M40 343L170 315 300 265 620 265 940 310 1015 335 1060 338 1130 325 1220 270 1470 220"/>
            <path d="M38 215L300 205 600 205 960 222 1090 215 1340 212 1470 180"/>
            <path d="M220 95L270 110 530 115 620 115 800 95"/>
          </g>
          <rect x="587" y="0" width="371" height="90" fill="#f6f3c2" stroke="#777" stroke-width="2.500"/>
          <rect x="1152" y="0" width="186" height="90" fill="#f6f3c2" stroke="#777" stroke-width="2.500"/>
          <rect x="973" y="0" width="167" height="122" fill="#3d7a18" stroke="#7ab04a" stroke-width="2"/>
          <path d="M985 85h8M1015 85h8M1045 85h8M1075 85h8M1105 85h8M1000 102h8M1030 102h8M1060 102h8M1090 102h8M1120 102h8M985 118h8M1015 118h8M1045 118h8M1075 118h8" stroke="#b6d68e" stroke-width="2"/>
        </g>
        <g shape-rendering="crispEdges">
          <path d="M707 400V480" stroke="#33bb33" stroke-width="1"/>
          <path d="M700.500 385V853M717.500 664V853" stroke="#14c2d6" stroke-width="2"/>
          <path d="M709.500 664V708" stroke="#0af00a" stroke-width="3"/>
          <path d="M709.500 708V775M710.500 775V815" stroke="#f00000" stroke-width="3"/>
          <path d="M710.500 815V846" stroke="#0af00a" stroke-width="3"/>
          <path d="M709.500 838L703 846 705 852H714L716 846Z" fill="#0af00a"/>
          <path d="M702 851.500H716" stroke="#14a0d6" stroke-width="2"/>
          <rect x="697" y="850" width="8" height="9" fill="#14c2d6" stroke="#000" stroke-width="2"/>
          <rect x="714" y="850" width="8" height="9" fill="#14c2d6" stroke="#000" stroke-width="2"/>
          <rect x="697" y="381" width="8" height="8" fill="#14c2d6" stroke="#000" stroke-width="2"/>
          <rect x="703" y="385" width="5" height="14" fill="#000"/>
        </g>
      </svg>
      <div class="mapbar">
        <i class="mb act3"><svg><use href="#mp"/></svg></i><i class="mb"><svg><use href="#dc"/></svg></i><i class="s mbs"></i><i class="mb"><svg><use href="#rfsh"/></svg></i><i class="mb"><svg viewBox="0 0 20 20"><path d="M6 4h3v12H6zM11 4h3v12h-3z" fill="#1f5f9c"/></svg></i>
        <svg class="sa mapl" viewBox="0 0 10 12"><path d="M7 1L2 6l5 5" fill="none" stroke="#555" stroke-width="2.200"/></svg>
        <i class="mapthumb"></i>
        <svg class="sa" viewBox="0 0 10 12"><path d="M3 1l5 5-5 5" fill="none" stroke="#555" stroke-width="2.200"/></svg>
      </div>
    </section>

    <section class="search">
      <div class="phead srhh"><span>搜索</span><span class="pclose"><svg class="pin" viewBox="0 0 10 10"><path d="M1 2v4M1 4h4M4 1.500h5v5H4z" fill="none" stroke="#111" stroke-width="1.300"/></svg><svg class="pin" viewBox="0 0 10 10"><path d="M1 1l8 8M9 1L1 9" stroke="#111" stroke-width="1.500"/></svg></span></div>
      <div class="srt">
        <i class="st"><svg><use href="#bk"/></svg></i><i class="st"><svg><use href="#fwd"/></svg></i><i class="s sts"></i>
        <i class="st"><svg><use href="#home"/></svg></i><i class="st"><svg><use href="#rfsh"/></svg></i><i class="s sts"></i>
        <i class="st"><svg><use href="#t5"/></svg></i><i class="dd ddl"></i>
        <div class="loc"><span>本地搜索</span><svg class="chev" viewBox="0 0 10 6"><path d="M1 1l4 4 4-4" fill="none" stroke="#777"/></svg></div>
      </div>
      <div class="srmain">
        <div class="sbody">
          <div class="stabs"><span class="on">全部</span><span>地图</span><span>数据</span><span>工具</span><span>图像</span></div>
          <div class="sbox"><div class="sinput"><span class="caret"></span>TIN转栅格<svg class="sx" viewBox="0 0 10 10"><path d="M1 1l8 8M9 1L1 9" stroke="#16256e" stroke-width="1.700"/></svg></div><div class="sgo"><svg viewBox="0 0 20 20"><circle cx="9" cy="9" r="4.500" fill="#dff" stroke="#1a6fa0" stroke-width="1.700"/><path d="M12 12l4 4" stroke="#1a6fa0" stroke-width="2.500"/></svg></div></div>
          <div class="srange"><span class="lnk">任何范围</span><i class="dd"></i></div>
          <div class="sres"><div class="sresl"><span class="lnk">返回的搜索结果 1 项</span><i class="dd"></i></div><div class="sresl"><span class="lnk">排序方式</span><i class="dd"></i></div></div>
          <div class="item">
            <svg class="itemic"><use href="#ham"/></svg>
            <div class="itxt">
              <div class="it1">TIN 转栅格 (3D Analyst) (工具)</div>
              <div class="it2">通过在指定采样距离处插入输入 TIN 高程值中的...</div>
              <div class="it3">工具箱\系统工具箱\3d analyst tools.tbx\转换\...</div>
            </div>
          </div>
        </div>
        <div class="sstrip"><svg class="schev" viewBox="0 0 12 8"><path d="M1 7l5-5 5 5" fill="none" stroke="#ccc" stroke-width="2.200"/></svg><svg class="schev" viewBox="0 0 12 8"><path d="M1 1l5 5 5-5" fill="none" stroke="#ccc" stroke-width="2.200"/></svg></div>
      </div>
      <div class="sfoot"></div>
    </section>

    <aside class="rtabs">
      <div class="rtab"><svg><use href="#catw"/></svg><span>目录</span></div>
      <div class="rtab"><svg><use href="#srw"/></svg><span>搜索</span></div>
    </aside>
  </main>
  <footer class="status"><span class="coord">970.566&nbsp;&nbsp;1000.877 未知单位</span></footer>

  <section class="dialog">
    <div class="dtitle">
      <svg class="dham"><use href="#ham"/></svg><span class="dname">TIN 转栅格</span>
      <div class="dbtns">
        <svg viewBox="0 0 12 12"><path d="M0 6h12" stroke="#999"/></svg>
        <svg viewBox="0 0 12 12"><path d="M.5 .5h11v11H.5z" fill="none" stroke="#999"/></svg>
        <svg viewBox="0 0 12 12"><path d="M0 0l12 12M12 0L0 12" stroke="#999"/></svg>
      </div>
    </div>
    <div class="dclient">
      <div class="dform">
        <label class="lab lab1">输入 TIN</label>
        <div class="line">
          <div class="fld combo1"><span>地表面</span><i class="tindd tindd2"></i></div>
          <div class="fb"><svg><use href="#ofld"/></svg></div>
        </div>
        <label class="lab lab2">输出栅格</label>
        <div class="line">
          <div class="fld out">E:\&nbsp;&nbsp;&nbsp;&nbsp;&nbsp;&nbsp;&nbsp;&nbsp;&nbsp;&nbsp;\my_work\ch07\栅格地表面</div>
          <div class="fb"><svg><use href="#ofld"/></svg></div>
        </div>
        <label class="lab lab3">输出数据类型（可选）</label>
        <div class="fld sel">FLOAT<svg class="chev" viewBox="0 0 10 6"><path d="M1 1l4 4 4-4" fill="none" stroke="#555"/></svg></div>
        <label class="lab lab4">方法（可选）</label>
        <div class="fld sel">LINEAR<svg class="chev" viewBox="0 0 10 6"><path d="M1 1l4 4 4-4" fill="none" stroke="#555"/></svg></div>
        <label class="lab lab4">采样距离（可选）</label>
        <div class="fld sel">CELLSIZE 0.2<svg class="chev" viewBox="0 0 10 6"><path d="M1 1l4 4 4-4" fill="none" stroke="#555"/></svg></div>
        <label class="lab lab4">Z 因子（可选）</label>
        <div class="fld num">1</div>
      </div>
      <div class="dscroll"><svg class="schev" viewBox="0 0 12 8"><path d="M1 7l5-5 5 5" fill="none" stroke="#ccc" stroke-width="2.200"/></svg><svg class="schev" viewBox="0 0 12 8"><path d="M1 1l5 5 5-5" fill="none" stroke="#ccc" stroke-width="2.200"/></svg></div>
    </div>
    <div class="dfoot">
      <span class="btn w1">确定</span><span class="btn w1">取消</span><span class="btn w2">环境...</span><span class="btn w3">显示帮助 &gt;&gt;</span>
    </div>
  </section>

  <svg class="logo"><use href="#bird"/></svg>

  <i class="red rb1"></i><i class="red rb2"></i><i class="red rb3"></i><i class="red rb4"></i><i class="red rb5"></i>
  <div class="note n1">1.在搜索面板中输入tin转栅格，点击tin转栅格</div>
  <div class="note n2">2.选择地表面为输入TIN</div>
  <div class="note n3">3.选择合适的文件夹作为输出文件夹，并以栅格地表面为输出文件名</div>
  <div class="note n4">4.输入框中内容</div>
  <div class="note n5">5.点击确定</div>
  <div class="wmark">CSDN @关于作业的二三事</div>
  <div class="redone">1</div>
</div>
</body>
</html>
```

FILE: styles.css
```css
* { box-sizing: border-box; }
html, body { margin: 0; height: 100%; }
body { font-family: "Noto Sans", "Noto Sans CJK SC", sans-serif; color: #000; background: #f0f0f0; }
i { font-style: normal; display: block; flex: none; }
.defs { position: absolute; width: 0; height: 0; }
.app { position: relative; width: 1920px; height: 1030px; overflow: hidden; display: flex; flex-direction: column; background: linear-gradient(90deg, #efefef 0%, #f7f7f7 45%, #fbfbfb 100%); }

/* title bar */
.titlebar { flex: none; height: 29px; background: #fff; display: flex; align-items: center; padding-left: 2px; }
.appicon { width: 20px; height: 20px; margin-right: 5px; }
.apptitle { font-size: 15.500px; }
.winbtns { margin-left: auto; display: flex; padding-right: 4px; }
.wb { width: 58.500px; height: 13px; }

/* menu */
.menubar { flex: none; height: 28px; display: flex; align-items: center; font-size: 12px; padding-left: 12px; }
.menubar span { white-space: nowrap; }
.m1 { width: 54px; } .m2 { width: 55px; } .m3 { width: 56px; } .m4 { width: 56px; } .m5 { width: 52px; }
.m6 { width: 55px; } .m7 { width: 81px; } .m8 { width: 68px; } .m9 { width: 60px; } .m10 { width: 60px; }

/* toolbars */
.tbrow { flex: none; display: flex; align-items: flex-start; }
.r1 { height: 27px; padding-left: 148px; }
.r2 { height: 26px; padding-left: 4px; }
.r3 { height: 27px; padding-left: 173px; }
.r4 { height: 26px; padding-left: 1220px; }
.tb { display: flex; align-items: center; height: 26px; background: rgba(255,255,255,.3); }
.tb1b { margin-left: 3px; }
.tb3b { margin-left: 3px; }
.tb3c { margin-left: 4px; }
.g { width: 5px; height: 18px; background: repeating-linear-gradient(180deg, #888 0 2px, transparent 2px 4px); background-size: 2px 100%; background-repeat: no-repeat; background-position: 1px 0; }
.tb1a .g, .tb1b .g, .tb3a .g, .tb3b .g, .tb3c .g, .tb4 .g { width: 7px; }
.b { width: 22.400px; height: 22px; display: flex; align-items: center; justify-content: center; }
.b svg { width: 18px; height: 18px; }
.b.act { background: #e3eef9; border: 1px solid #a6c8e6; }
.b.act2 { background: #eaf3fb; border: 2px solid #0a74d6; }
.s { width: 5px; height: 18px; background: linear-gradient(#b9b9b9, #b9b9b9) center / 1px 100% no-repeat; }
.s.sn { width: 4px; }
.tb2 .s { width: 5.500px; }
.tb3a .s { width: 5.700px; }
.tb3b .s { width: 5.400px; }
.o { width: 12px; height: 26px; align-self: flex-end; background: linear-gradient(#f3f3f3, #9a9a9a); position: relative; margin-left: auto; }
.o::after { content: ""; position: absolute; left: 3px; bottom: 3px; width: 6px; height: 4px; clip-path: polygon(0 0, 100% 0, 100% 25%, 50% 100%, 0 25%); background-color: #111; }
.dd { width: 11px; height: 10px; background: #222; clip-path: polygon(2px 3px, 9px 3px, 5.500px 7px); }
.dd.dis { background: #bbb; }
.tl { font-size: 12px; white-space: nowrap; padding-left: 4px; }
.pct { width: 60px; height: 22px; background: #fff; border: 1px solid #c8c8c8; display: flex; align-items: center; justify-content: space-between; padding: 2px 6px 2px 2px; flex: none; }
.pctv { background: #efefef; font: 11px "Liberation Mono", monospace; color: #888; height: 100%; width: 38px; line-height: 16px; padding-left: 1px; }
.scale { width: 150px; height: 22px; background: #fff; border: 1px solid #c8c8c8; display: flex; align-items: center; justify-content: space-between; padding: 2px 6px 2px 2px; flex: none; }
.scalev { background: #efefef; width: 124px; height: 100%; }
.chev { width: 10px; height: 6px; flex: none; }
.nacombo { width: 180px; height: 24px; background: #c8c8c8; display: flex; align-items: center; justify-content: flex-end; padding-right: 6px; flex: none; }
.tincombo { width: 180px; height: 24px; background: #fff; border: 2px solid #777; border-right-color: #ddd; border-bottom-color: #ddd; display: flex; align-items: center; flex: none; padding-left: 2px; }
.tinic { width: 18px; height: 18px; }
.tinv { font-size: 14px; margin-left: 3px; }
.tindd { margin-left: auto; width: 16px; height: 20px; background: #ececec; position: relative; }
.tindd::after { content: ""; position: absolute; left: 3px; top: 7px; border: 5px solid transparent; border-top: 6px solid #000; border-bottom: 0; }

/* main */
.main { flex: 1; min-height: 0; display: flex; }
.toc { flex: none; width: 264px; display: flex; flex-direction: column; margin-right: 5px; }
.phead { flex: none; height: 22px; display: flex; align-items: center; justify-content: space-between; font-size: 12px; padding: 0 5px; color: #111; }
.toch { background: linear-gradient(90deg, #bccfe2, #d6e3f0); }
.srhh { width: 292px; background: linear-gradient(90deg, #a4bedb, #b8cfe6); }
.pclose { display: flex; gap: 5px; align-items: center; }
.pin { width: 10px; height: 10px; }
.toct { flex: none; height: 26px; display: flex; align-items: center; padding-left: 5px; background: #f4f4f4; }
.tc { width: 21px; height: 21px; display: flex; align-items: center; justify-content: center; }
.tc svg { width: 17px; height: 17px; }
.tcact { background: #e3eef9; border: 1px solid #0a74d6; }
.tcs { margin: 0 3px; }
.treebox { flex: 1; min-height: 0; border: 1px solid #8a8a90; background: #fff; display: flex; flex-direction: column; margin-right: 1px; }
.tree { flex: 1; min-height: 0; padding-top: 1.500px; overflow: hidden; }
.r { display: flex; align-items: center; height: 22.950px; font-size: 15px; white-space: nowrap; line-height: 1; }
.x { width: 9px; height: 9px; border: 1px solid #8a8a8a; background: linear-gradient(#345, #345) center / 5px 1px no-repeat #eee; }
.ti { width: 17px; height: 17px; flex: none; }
.ck { width: 11px; height: 11px; border: 1.500px solid #111; background: #fff; position: relative; }
.ck::after { content: ""; position: absolute; left: 2px; top: 0; width: 4px; height: 7px; border: solid #000; border-width: 0 1.500px 1.500px 0; transform: rotate(40deg); }
.l0 { padding-left: 8px; }
.l1 { padding-left: 28px; }
.l2 { padding-left: 47px; }
.l3 { padding-left: 66px; }
.tiroot { margin-left: 7px; }
.rootname { margin-left: 3px; font-weight: 700; }
.l1 .ti { margin-left: 7px; }
.t1 { margin-left: 2px; }
.l2 .ck { margin-left: 8px; }
.t2 { margin-left: 7px; }
.tig { margin-left: 5px; }
.t2g { margin-left: 3px; }
.l3 .ck { margin-left: 8px; }
.t3 { margin-left: 5px; padding: 0 2px; line-height: 23px; }
.selected { background: #0078d7; color: #fff; }
.sdot { padding-left: 80px; }
.dot { width: 8px; height: 8px; border-radius: 50%; background: #a0057e; border: 2px solid #111; }
.sw { padding-left: 96px; }
.swt { width: 15px; height: 11px; border: 1px solid #666; }
.river { background: #00246e; }
.bld { background: #f6f3c2; }
.park { background: #6da34c; border-color: #8db06c; }
.lh { padding-left: 101px; }
.lg { padding-left: 77px; letter-spacing: .35px; }
.lc { width: 14px; height: 10px; margin-right: 5px; }
.ln { width: 15px; height: 2px; background: #0b55b8; margin-right: 4px; }
.c1 { background: #fbf9fe; } .c2 { background: #b4b2b4; } .c3 { background: #7c4a2c; } .c4 { background: #701c00; }
.c5 { background: #c04400; } .c6 { background: #a8a826; } .c7 { background: #1fa030; } .c8 { background: #eefbb8; } .c9 { background: #aeeee6; }
.tocscroll { flex: none; height: 20px; background: #efefef; display: flex; align-items: center; justify-content: space-between; padding: 0 6px; margin: 0 1px 1px; }
.sa { width: 10px; height: 12px; flex: none; }
.tocthumb { width: 94px; height: 19px; background: #c9c9c9; margin-right: auto; margin-left: 5px; }
.mapcol { flex: none; width: 1326px; border-top: 2px solid #777; border-left: 2px solid #777; display: flex; flex-direction: column; background: #fff; margin-right: 3px; }
.map { flex: 1; min-height: 0; width: 100%; display: block; }
.mapbar { flex: none; height: 21px; background: #efefef; border-top: 1px solid #ddd; border-bottom: 1px solid #fff; display: flex; align-items: center; }
.mb { width: 16px; height: 18px; display: flex; align-items: center; justify-content: center; margin-right: 1px; }
.mb svg { width: 12px; height: 12px; }
.act3 { background: #b5d7f5; width: 17px; }
.mbs { margin: 0 2px 0 0; }
.mapl { margin-left: 4px; }
.mapthumb { flex: 1; height: 19px; background: #c9c9c9; margin: 0 4px 0 3px; }
.search { flex: none; width: 302px; display: flex; flex-direction: column; background: #f8f8f8; }
.srt { flex: none; height: 27px; display: flex; align-items: center; padding-left: 2px; background: linear-gradient(90deg, #f0f0f0, #f6f6f6); }
.st { width: 21px; height: 21px; display: flex; align-items: center; justify-content: center; }
.st svg { width: 18px; height: 18px; }
.sts { height: 24px; margin: 0 2px; }
.ddl { margin-left: 1px; width: 12px; transform: scale(1.300); margin-right: 2px; }
.loc { margin-left: 2px; width: 155px; height: 23px; background: #dedede; border: 1px solid #aaa; font-size: 12px; display: flex; align-items: center; justify-content: space-between; padding: 0 3px; }
.srmain { flex: 1; min-height: 0; display: flex; }
.sbody { flex: none; width: 284px; background: #fff; border-top: 1px solid #ccc; }
.sstrip { flex: 1; display: flex; flex-direction: column; justify-content: space-between; align-items: center; padding: 20px 0 2px; background: #f9f9f9; }
.schev { width: 12px; height: 8px; flex: none; }
.stabs { display: flex; font-size: 9.500px; height: 20px; align-items: center; padding: 8px 0 0 10px; }
.stabs span { width: 37px; color: #0645c8; text-decoration: underline; }
.stabs .on { color: #000; text-decoration: none; font-weight: 700; }
.sbox { display: flex; align-items: center; padding-left: 9px; margin-top: 7px; }
.sinput { width: 220px; height: 23px; border: 1px solid #aaa; border-top: 2px solid #555; border-left: 2px solid #666; font-size: 12px; display: flex; align-items: center; padding-left: 1px; color: #111; }
.caret { width: 1px; height: 16px; background: #000; margin-right: 1px; }
.sx { width: 9px; height: 9px; margin-left: auto; margin-right: 6px; }
.sgo { width: 21px; height: 21px; border-radius: 50%; background: #bcdcf4; border: 1px solid #8bb8dc; margin-left: 13px; display: flex; align-items: center; justify-content: center; }
.sgo svg { width: 17px; height: 17px; }
.lnk { color: #0645c8; text-decoration: underline; }
.srange { display: flex; align-items: center; font-size: 10px; padding-left: 9px; height: 20px; margin-top: -1px; }
.sres { margin-top: 10px; height: 25px; background: #f3f3f3; border-top: 2px solid #ccc; border-bottom: 1px solid #bbb; display: flex; justify-content: space-between; align-items: center; padding: 0 10px 0 9px; font-size: 9.500px; }
.sresl { display: flex; align-items: center; }
.item { display: flex; padding: 0 0 0 5px; }
.itemic { width: 17px; height: 17px; flex: none; margin-top: 1px; }
.itxt { margin-left: 4px; font-size: 11.500px; line-height: 14.700px; white-space: nowrap; }
.it1 { color: #0a7f1d; position: relative; font-size: 12px; }
.it1::after { content: ""; position: absolute; left: 0; top: 14px; width: 146px; height: 1px; background: #0a6f1d; }
.it2 { color: #152a85; }
.it3 { color: #0a7f1d; }
.sfoot { flex: none; height: 24px; background: #efefef; border-top: 1px solid #bbb; width: 284px; }
.rtabs { flex: none; width: 20px; padding-top: 3px; display: flex; flex-direction: column; gap: 1px; background: #fbfbfb; }
.rtab { width: 20px; height: 51px; border: 1px solid #aaa; border-right: 0; border-radius: 5px 0 0 5px; background: #f4f4f4; display: flex; flex-direction: column; align-items: center; font-size: 12px; color: #666; line-height: 13px; padding-top: 3px; }
.rtab svg { width: 15px; height: 15px; flex: none; margin-bottom: 2px; }
.rtab span { writing-mode: vertical-rl; text-orientation: sideways; }
.status { flex: none; height: 23px; background: #efefef; font-size: 13px; display: flex; align-items: center; padding-left: 1638px; white-space: nowrap; }

/* dialog */
.dialog { position: absolute; left: 708px; top: 164px; width: 685px; height: 500px; background: #efefef; box-shadow: 3px 3px 8px rgba(0,0,0,.35); display: flex; flex-direction: column; border: 1px solid #aaa; border-top-color: #888; }
.dtitle { flex: none; height: 32px; background: #fff; display: flex; align-items: center; padding: 0 0 7px 8px; border-bottom: 2px solid #888; }
.dham { width: 21px; height: 21px; }
.dname { font-size: 14px; color: #9a9a9a; margin-left: 4px; letter-spacing: .4px; }
.dbtns { margin-left: auto; display: flex; gap: 46px; padding-right: 24px; }
.dbtns svg { width: 12px; height: 12px; }
.dclient { flex: 1; min-height: 0; display: flex; }
.dform { flex: none; width: 663px; padding: 14px 0 0 20px; }
.lab { display: block; font: 14px/20px "Liberation Mono", "Noto Sans CJK SC", monospace; letter-spacing: .4px; white-space: pre; }
.lab1 { height: 18px; line-height: 18px; }
.lab2 { height: 22px; line-height: 24px; }
.lab3 { height: 21px; line-height: 24px; }
.lab4 { height: 20px; line-height: 22px; }
.fld { height: 24px; background: #fff; border: 1px solid #777; font: 13.300px/22px "Liberation Mono", "Noto Sans CJK SC", monospace; padding-left: 2px; white-space: nowrap; }
.line { display: flex; align-items: center; height: 30px; }
.combo1 { width: 594px; height: 22px; border: 1px solid #ddd; border-top: 2px solid #666; border-left: 1px solid #888; display: flex; align-items: center; background: #fff; font-size: 14px; padding-left: 2px; }
.tindd2 { height: 18px; }
.out { width: 596px; height: 24px; }
.fb { width: 27px; height: 30px; background: #e8e8e8; border: 1px solid #ccc; margin-left: 10px; display: flex; align-items: center; justify-content: center; flex: none; }
.fb svg { width: 18px; height: 18px; }
.sel { width: 632px; display: flex; align-items: center; justify-content: space-between; padding-right: 5px; }
.num { width: 632px; text-align: right; padding-right: 3px; }
.dscroll { flex: none; width: 20px; background: #f6f6f6; display: flex; flex-direction: column; justify-content: space-between; align-items: center; padding: 18px 0; }
.dfoot { flex: none; height: 54px; background: #efefef; border-top: 2px solid #fff; display: flex; align-items: flex-start; padding: 12px 9px 0 267px; gap: 7px; }
.btn { height: 25px; background: #e1e1e1; border: 1px solid #adadad; font-size: 14px; line-height: 23px; text-align: center; white-space: nowrap; }
.w1 { width: 86px; } .w2 { width: 103px; } .w3 { width: 112px; }

/* overlays on the screenshot */
.logo { position: absolute; left: 1816px; top: 536px; width: 62px; height: 68px; }
.red { position: absolute; border: 1px solid #e8212b; }
.rb1 { left: 1586px; top: 166px; width: 303px; height: 336px; }
.rb2 { left: 1884px; top: 219px; width: 40px; height: 69px; }
.rb3 { left: 725px; top: 228px; width: 659px; height: 85px; }
.rb4 { left: 729px; top: 414px; width: 633px; height: 35px; }
.rb5 { left: 976px; top: 612px; width: 89px; height: 44px; }
.note { position: absolute; font-size: 23px; line-height: 28px; color: #4656cc; white-space: nowrap; }
.n1 { left: 1455px; top: 383px; }
.n2 { left: 862px; top: 199px; letter-spacing: -.2px; }
.n3 { left: 803px; top: 255px; letter-spacing: .28px; }
.n4 { left: 883px; top: 432px; }
.n5 { left: 953px; top: 580px; }
.wmark { position: absolute; left: 1673px; top: 998px; font-size: 19.500px; line-height: 26px; color: rgba(110,110,110,.65); white-space: nowrap; }
.redone { position: absolute; left: 1736px; top: 994px; font-size: 9px; line-height: 12px; color: #f00; }
```
